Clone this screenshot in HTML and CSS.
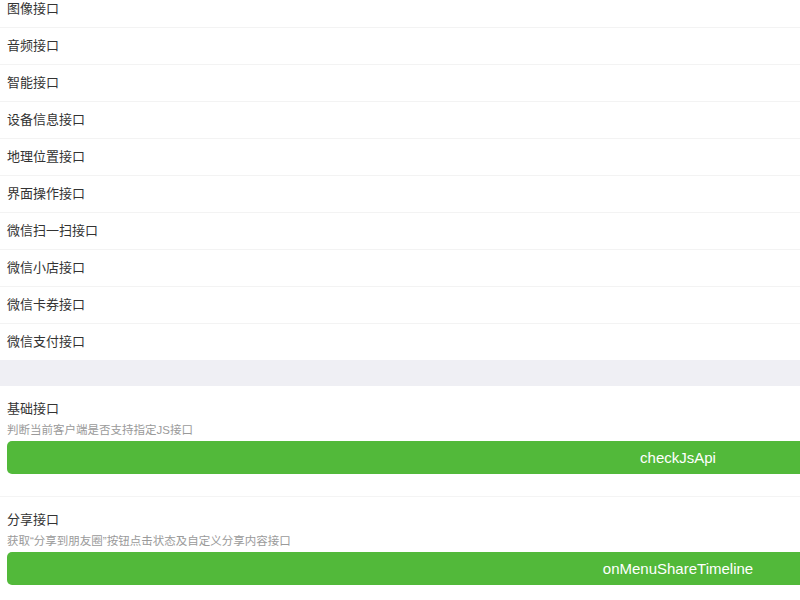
FILE: index.html
```html
<!DOCTYPE html>
<html lang="zh-CN">
<head>
<meta charset="utf-8">
<title>微信JS-SDK Demo</title>
<link rel="stylesheet" href="styles.css">
</head>
<body>
<div class="page">
  <ul class="menu">
    <li class="menu-item">图像接口</li>
    <li class="menu-item">音频接口</li>
    <li class="menu-item">智能接口</li>
    <li class="menu-item">设备信息接口</li>
    <li class="menu-item">地理位置接口</li>
    <li class="menu-item">界面操作接口</li>
    <li class="menu-item">微信扫一扫接口</li>
    <li class="menu-item">微信小店接口</li>
    <li class="menu-item">微信卡券接口</li>
    <li class="menu-item last">微信支付接口</li>
  </ul>
  <div class="gap"></div>
  <div class="section">
    <h3 class="title">基础接口</h3>
    <p class="desc">判断当前客户端是否支持指定JS接口</p>
    <button class="btn">checkJsApi</button>
  </div>
  <div class="section">
    <h3 class="title">分享接口</h3>
    <p class="desc">获取“分享到朋友圈”按钮点击状态及自定义分享内容接口</p>
    <button class="btn">onMenuShareTimeline</button>
  </div>
</div>
</body>
</html>
```
FILE: styles.css
```css
html, body {
  margin: 0;
  padding: 0;
  background: #ffffff;
  overflow: hidden;
}
body {
  font-family: "Liberation Sans", "Noto Sans CJK SC", sans-serif;
  color: #333333;
}
.page {
  width: 1356px;
}
.menu {
  list-style: none;
  margin: -9px 0 0 0;
  padding: 0;
}
.menu-item {
  height: 36px;
  line-height: 36px;
  padding-left: 7px;
  font-size: 13px;
  color: #333333;
  border-bottom: 1px solid #f3f3f3;
}
.menu-item.last {
  border-bottom: none;
  height: 36px;
}
.gap {
  height: 26px;
  background: #efeff4;
}
.section {
  padding: 13px 7px 22px 7px;
  border-bottom: 1px solid #f4f4f4;
}
.title {
  margin: 0;
  font-size: 13px;
  font-weight: normal;
  line-height: 20px;
  color: #333333;
}
.desc {
  margin: 3px 0 0 0;
  font-size: 11.5px;
  line-height: 16px;
  color: #9a9a9a;
}
.btn {
  display: block;
  width: 100%;
  height: 33px;
  margin-top: 3px;
  border: none;
  border-radius: 5px;
  background: #52b93a;
  color: #ffffff;
  font-family: "Liberation Sans", sans-serif;
  font-size: 15px;
  padding: 0;
}
```
